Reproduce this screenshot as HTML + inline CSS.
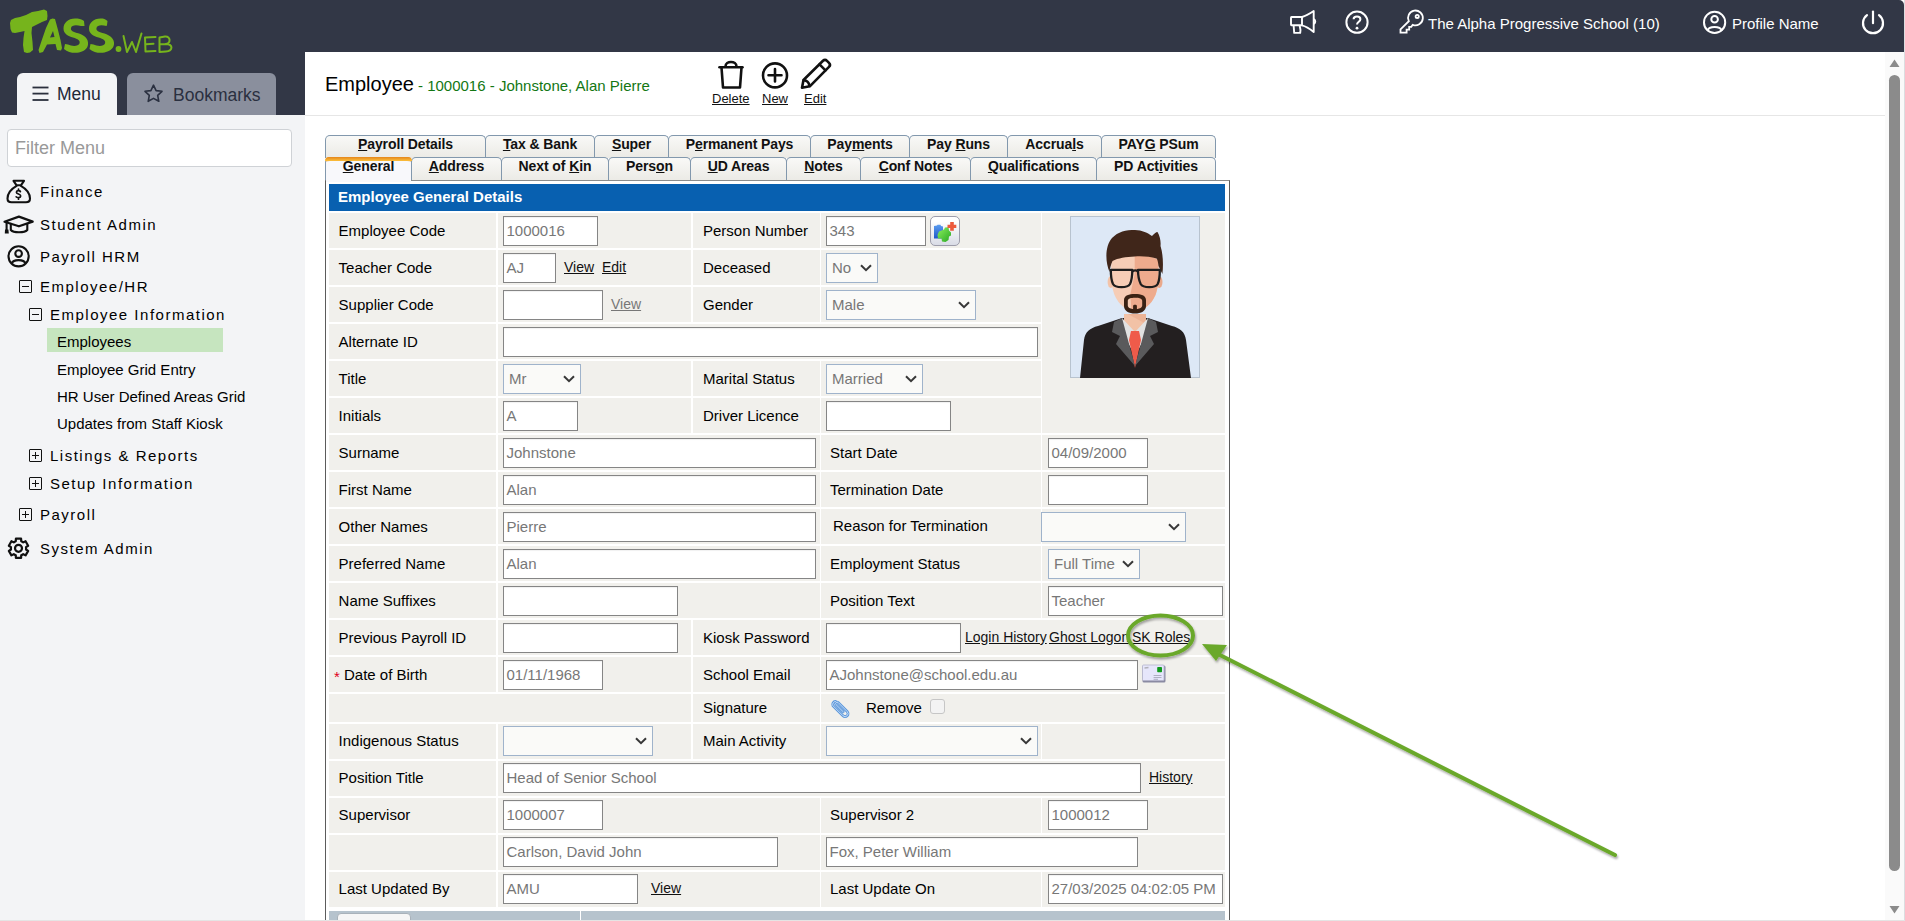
<!DOCTYPE html><html><head><meta charset="utf-8"><title>TASS.web Employee</title><style>
*{box-sizing:border-box}
html,body{margin:0;padding:0;width:1905px;height:921px;overflow:hidden;background:#fff;font-family:"Liberation Sans",sans-serif;color:#000}
.a{position:absolute}
#hdr{left:0;top:0;width:1904px;height:52px;background:#323746;border-top-right-radius:5px}
#sbtop{left:0;top:52px;width:305px;height:63px;background:#323746}
#sb{left:0;top:115px;width:305px;height:806px;background:#f3f4f6}
.tabm{border-radius:6px 6px 0 0;height:42px;top:73px}
.ht{color:#fff;font-size:15px;white-space:nowrap}
.si{font-size:15px;letter-spacing:1.5px;white-space:nowrap;line-height:18px}
.sub{font-size:15px;white-space:nowrap;line-height:18px}
.box{width:13px;height:13px;border:1.3px solid #111;border-radius:1px}
.box:before{content:"";position:absolute;left:2px;top:4.7px;width:6.5px;height:1.4px;background:#111}
.box.p:after{content:"";position:absolute;left:4.6px;top:2px;width:1.4px;height:6.5px;background:#111}
.tab{height:23px;border:1px solid #8298ad;border-bottom:none;border-radius:5px 5px 0 0;background:linear-gradient(#f9f9f7,#ebeae5);font-size:14px;font-weight:bold;text-align:center;line-height:16px;color:#111;letter-spacing:-0.1px;white-space:nowrap}
.tab u{text-decoration:underline}
.c{position:absolute;background:#f1f0ec}
.l{position:absolute;font-size:15px;line-height:35px;white-space:nowrap}
.i{position:absolute;height:30px;border:1px solid #858585;background:#fff;font-size:15px;color:#777;line-height:28px;padding-left:2.5px;box-shadow:inset 0 1px 1px rgba(0,0,0,0.06);white-space:nowrap;overflow:hidden}
.s{position:absolute;height:30px;border:1px solid #9fb3cb;background:#fafaf8;font-size:15px;color:#777;line-height:28px;padding-left:5px;white-space:nowrap;overflow:hidden}
.s svg{position:absolute;right:5px;top:10px}
.lk{position:absolute;font-size:14px;text-decoration:underline;white-space:nowrap;color:#111;line-height:16px}
</style></head><body>
<div id="hdr" class="a"></div><div id="sbtop" class="a"></div><div id="sb" class="a"></div>
<svg class="a" style="left:0;top:0" width="180" height="60" viewBox="0 0 180 60">
<g fill="#76b41c">
<path d="M10 23 L11 20 L15 18 L20 17 L26 15 L32 12 L38 11 L44 9.5 L47 11 L47.5 16 L47 20 L42 22 L36 25 L32 27 L31.5 33 L32.5 42 L33 50 L30 52.5 L27 53 L24 52 L23 45 L23.5 38 L24.5 31 L20 32 L15 33 L12 32.5 L10.5 29 Z"/>
<path d="M52.5 18.5 L55 19 L58 30 L60.5 40 L62 48 L61 50.5 L57 50 L55.5 44 L47 44.5 L43 52 L39.5 53 L38.5 50 L41.5 41 L46 28 L50 19.5 Z M50 37.5 L54.5 37 L53 31 Z" fill-rule="evenodd"/>
<path d="M75 18.5 C68 18.5 63.5 23 63.5 28.5 C63.5 34 68 36 73 37.5 C78 39 80.5 40.5 79.5 43.5 C78.5 46.5 72 46.5 68 44.5 L65 44 L64 49 C68 52.5 74 53.5 79 52.5 C85.5 51 88.5 47.5 88 42.5 C87.5 37 82.5 34.5 77 33 C72.5 31.8 70.5 30.5 71 28 C71.5 25 76 24.5 81 26 L84.5 26 L84 21 C81.5 19 78.5 18.5 75 18.5 Z"/>
<path d="M100.5 18.5 C93.5 18.5 89 23 89 28.5 C89 34 93.5 36 98.5 37.5 C103.5 39 106 40.5 105 43.5 C104 46.5 97.5 46.5 93.5 44.5 L90.5 44 L89.5 49 C93.5 52.5 99.5 53.5 104.5 52.5 C111 51 114.5 47.5 114 42.5 C113.5 37 108 34.5 102.5 33 C98 31.8 96 30.5 96.5 28 C97 25 101.5 24.5 106.5 26 L107 25 L107.5 21 C105 19 104 18.5 100.5 18.5 Z"/>
<circle cx="118.5" cy="49" r="2.9"/>
</g>
<g fill="none" stroke="#76b41c" stroke-width="2" stroke-linecap="round" stroke-linejoin="round">
<path d="M123.5 36 L127 52 L132 42 L136 52 L141.5 33.5"/>
<path d="M155.5 37 L145 37.5 L145.5 51.5 L155.5 51 M146 44.3 L153.5 43.8"/>
<path d="M159.5 37.5 L159.5 52 L166 51.5 C173 51 173.5 44 166 44 L159.5 44.3 M159.5 37.5 L165 36.5 C171 36 171 43.5 165.5 44"/>
</g></svg>
<div class="a tabm" style="left:17px;width:100px;background:#f3f4f6"></div>
<div class="a tabm" style="left:127px;width:149px;background:#8a8f9d"></div>
<svg class="a" style="left:31px;top:86px" width="19" height="15"><g stroke="#2a2f3d" stroke-width="1.8"><line x1="1.5" y1="1.5" x2="17.5" y2="1.5"/><line x1="1.5" y1="7.6" x2="17.5" y2="7.6"/><line x1="1.5" y1="14" x2="17.5" y2="14"/></g></svg>
<div class="a" style="left:57px;top:84px;font-size:17.5px;color:#222736;line-height:20px">Menu</div>
<svg class="a" style="left:143px;top:84px" width="21" height="19" viewBox="0 0 21 19"><path d="M10.5 1.2 L13.1 6.6 L19 7.3 L14.7 11.3 L15.8 17.3 L10.5 14.4 L5.2 17.3 L6.3 11.3 L2 7.3 L7.9 6.6 Z" fill="none" stroke="#2a3040" stroke-width="1.6" stroke-linejoin="round"/></svg>
<div class="a" style="left:173px;top:85px;font-size:17.5px;color:#2a3040;line-height:20px">Bookmarks</div>
<div class="a" style="left:7px;top:129px;width:285px;height:38px;border:1px solid #cfd2d6;border-radius:4px;background:#fff"></div>
<div class="a" style="left:15px;top:138px;font-size:18px;color:#999;line-height:21px">Filter Menu</div>
<div class="a si" style="left:40px;top:183px">Finance</div>
<div class="a si" style="left:40px;top:216px">Student Admin</div>
<div class="a si" style="left:40px;top:248px">Payroll HRM</div>
<div class="a si" style="left:40px;top:278px">Employee/HR</div>
<div class="a si" style="left:50px;top:306px">Employee Information</div>
<div class="a si" style="left:50px;top:447px">Listings &amp; Reports</div>
<div class="a si" style="left:50px;top:475px">Setup Information</div>
<div class="a si" style="left:40px;top:506px">Payroll</div>
<div class="a si" style="left:40px;top:540px">System Admin</div>
<div class="a" style="left:47px;top:328px;width:176px;height:24px;background:#c6e5bf"></div>
<div class="a sub" style="left:57px;top:333px">Employees</div>
<div class="a sub" style="left:57px;top:361px">Employee Grid Entry</div>
<div class="a sub" style="left:57px;top:388px">HR User Defined Areas Grid</div>
<div class="a sub" style="left:57px;top:415px">Updates from Staff Kiosk</div>
<div class="a box" style="left:19px;top:280px"></div>
<div class="a box" style="left:29px;top:308px"></div>
<div class="a box p" style="left:29px;top:449px"></div>
<div class="a box p" style="left:29px;top:477px"></div>
<div class="a box p" style="left:19px;top:508px"></div>
<svg class="a" style="left:0;top:175px" width="40" height="60" viewBox="0 175 40 60"><g fill="none" stroke="#111" stroke-width="2.1" stroke-linejoin="round" stroke-linecap="round">
<path d="M13.5 180.8 L24 180.8 L20.9 185.3 L16.6 185.3 Z"/>
<path d="M16.6 185.8 C11 189 7.5 194 7.5 198.5 C7.5 201 9 202.3 11.5 202.3 L26 202.3 C28.5 202.3 30 201 30 198.5 C30 194 26.5 189 20.9 185.8"/>
<path d="M20.4 191.6 C19.9 190.3 16.4 190.2 16.4 192.3 C16.4 194.3 20.7 193.8 20.7 196 C20.7 198 17.1 198 16.1 196.8 M18.5 189 L18.5 190.2 M18.5 197.9 L18.5 199.2" stroke-width="1.7"/>
<path d="M4.5 221.8 L18.9 216.6 L32.7 221.6 L18.9 226.3 Z" stroke-width="2.2"/>
<path d="M10.8 223.8 L10.8 230 C13.5 233 24.5 233 27.3 230 L27.3 223.8"/>
<path d="M6.6 222.5 L6.6 230"/>
</g><path d="M5 229.5 L8.4 229.5 L8.8 233.4 L4.8 233.4 Z" fill="#111"/></svg>
<svg class="a" style="left:0;top:240px" width="40" height="40" viewBox="0 240 40 40"><g fill="none" stroke="#111" stroke-width="2.1">
<circle cx="18.6" cy="256.3" r="10.1"/><circle cx="18.6" cy="253.6" r="3.3"/>
<path d="M11.8 263.5 C13 259 24.2 259 25.4 263.5"/></g></svg>
<svg class="a" style="left:0;top:530px" width="40" height="40" viewBox="0 530 40 40"><g fill="none" stroke="#111" stroke-width="2.2" stroke-linejoin="round">
<path d="M15.78 541.20 L15.91 538.64 L21.09 538.64 L21.22 541.20 A7.6 7.6 0 0 1 23.28 542.39 L25.57 541.23 L28.16 545.71 L26.01 547.11 A7.6 7.6 0 0 1 26.01 549.49 L28.16 550.89 L25.57 555.37 L23.28 554.21 A7.6 7.6 0 0 1 21.22 555.40 L21.09 557.96 L15.91 557.96 L15.78 555.40 A7.6 7.6 0 0 1 13.72 554.21 L11.43 555.37 L8.84 550.89 L10.99 549.49 A7.6 7.6 0 0 1 10.99 547.11 L8.84 545.71 L11.43 541.23 L13.72 542.39 A7.6 7.6 0 0 1 15.78 541.20 Z"/><circle cx="18.5" cy="548.3" r="3.5"/></g></svg>
<svg class="a" style="left:1280px;top:0" width="40" height="40" viewBox="1280 0 40 40"><g fill="none" stroke="#fff" stroke-width="1.9" stroke-linejoin="round">
<path d="M1291.5 17 L1302 17 L1302 25.3 L1291.5 25.3 Q1291 25.3 1291 24.6 L1291 17.7 Q1291 17 1291.5 17 Z"/>
<path d="M1302 17 C1306 16 1310 13.5 1313.7 11 L1313.7 32 C1310 29 1306 26.3 1302 25.3"/>
<path d="M1313.7 19.2 C1315.8 20 1315.8 23 1313.7 23.8"/>
<path d="M1293.6 25.3 L1294.2 32.9 L1300.2 32.9 L1300.5 30 L1299.6 25.3"/>
</g></svg>
<svg class="a" style="left:1344px;top:9px" width="26" height="26" viewBox="0 0 26 26"><g fill="none" stroke="#fff" stroke-width="2"><circle cx="13" cy="13.2" r="10.6"/><path d="M9.6 10.2 C9.6 6.6 16.4 6.6 16.4 10.2 C16.4 12.6 13 12.9 13 15.6"/></g><circle cx="13" cy="19.2" r="1.4" fill="#fff"/></svg>
<svg class="a" style="left:1390px;top:0" width="40" height="40" viewBox="1390 0 40 40"><g fill="none" stroke="#fff" stroke-width="1.8" stroke-linejoin="miter">
<path d="M1408.8 21.2 A7.4 7.4 0 1 1 1412.7 24.8 L1411.3 26.8 L1409.2 26.8 L1409.2 29.6 L1406.6 29.6 L1406.6 32.6 L1400.5 32.6 L1400.5 29.4 Z"/>
<circle cx="1417.2" cy="16.4" r="1.6"/></g></svg>
<div class="a ht" style="left:1428px;top:15px;line-height:18px">The Alpha Progressive School (10)</div>
<svg class="a" style="left:1695px;top:0" width="200" height="45" viewBox="1695 0 200 45"><g fill="none" stroke="#fff" stroke-width="2" stroke-linecap="round">
<circle cx="1714.6" cy="22.4" r="10.6"/><circle cx="1714.6" cy="19.2" r="3.3"/><path d="M1707.6 30.2 C1709 25.8 1720.2 25.8 1721.6 30.2"/>
<path d="M1867 15.2 A10 10 0 1 0 1879 15.2" stroke-width="2.2"/><path d="M1873 11.5 L1873 23.2" stroke-width="2.2"/></g></svg>
<div class="a ht" style="left:1732px;top:15px;line-height:18px">Profile Name</div>
<div class="a" style="left:1885px;top:52px;width:19px;height:869px;background:#fafafa"></div>
<div class="a" style="left:1904px;top:0;width:1px;height:921px;background:#dcdde0"></div>
<svg class="a" style="left:1889px;top:59px" width="11" height="9"><path d="M5.5 0.5 L10.5 8 L0.5 8 Z" fill="#8b8b8b"/></svg>
<div class="a" style="left:1889px;top:75px;width:11px;height:796px;border-radius:6px;background:#8b8b8b"></div>
<svg class="a" style="left:1889px;top:905px" width="11" height="9"><path d="M0.5 1 L10.5 1 L5.5 8.5 Z" fill="#8b8b8b"/></svg>
<div class="a" style="left:305px;top:115px;width:1580px;height:1px;background:#e6e6e6"></div>
<div class="a" style="left:325px;top:73px;font-size:20px;line-height:23px">Employee</div>
<div class="a" style="left:418px;top:77px;font-size:15px;line-height:18px;color:#137713">- 1000016 - Johnstone, Alan Pierre</div>
<svg class="a" style="left:700px;top:55px" width="140" height="40" viewBox="700 55 140 40"><g fill="none" stroke="#111" stroke-width="2.6" stroke-linejoin="round" stroke-linecap="round">
<path d="M719.5 67.3 L742.5 67.3"/><path d="M725.5 66.5 C725.5 60.5 736.5 60.5 736.5 66.5"/><path d="M721.5 67.5 L723 87.5 L740 87.5 L741.5 67.5"/>
<circle cx="775" cy="75.4" r="12"/><path d="M775 69 L775 81.5 M768.5 75.3 L781.5 75.3"/>
<path d="M802 87.8 L803.5 80 L823 60.8 C824.3 59.5 825.7 59.5 827 60.8 L829 62.8 C830.3 64.1 830.3 65.5 829 66.8 L809.8 86.3 Z"/><path d="M819.5 64.3 L825.5 70.3"/><path d="M803.8 80.3 C806.5 80.5 809 82.5 809.5 86"/>
</g></svg>
<div class="a lk" style="left:712px;top:91px;font-size:13px">Delete</div>
<div class="a lk" style="left:762px;top:91px;font-size:13px">New</div>
<div class="a lk" style="left:804px;top:91px;font-size:13px">Edit</div>
<div class="a tab" style="left:325px;top:135px;width:161px;height:23px"><u>P</u>ayroll Details</div>
<div class="a tab" style="left:485px;top:135px;width:110px;height:23px"><u>T</u>ax &amp; Bank</div>
<div class="a tab" style="left:594px;top:135px;width:75px;height:23px"><u>S</u>uper</div>
<div class="a tab" style="left:668px;top:135px;width:143px;height:23px">P<u>e</u>rmanent Pays</div>
<div class="a tab" style="left:810px;top:135px;width:100px;height:23px">Pay<u>m</u>ents</div>
<div class="a tab" style="left:909px;top:135px;width:99px;height:23px">Pay <u>R</u>uns</div>
<div class="a tab" style="left:1007px;top:135px;width:95px;height:23px">Accrua<u>l</u>s</div>
<div class="a tab" style="left:1101px;top:135px;width:115px;height:23px">PAY<u>G</u> PSum</div>
<div class="a tab" style="left:325px;top:157px;width:87px;height:24px;background:#f8f8fb;border-top:4px solid #f0a02a;line-height:11px"><u>G</u>eneral</div>
<div class="a tab" style="left:411px;top:157px;width:91px;height:24px"><u>A</u>ddress</div>
<div class="a tab" style="left:501px;top:157px;width:108px;height:24px">Next of <u>K</u>in</div>
<div class="a tab" style="left:608px;top:157px;width:83px;height:24px">Pers<u>o</u>n</div>
<div class="a tab" style="left:690px;top:157px;width:97px;height:24px"><u>U</u>D Areas</div>
<div class="a tab" style="left:786px;top:157px;width:75px;height:24px"><u>N</u>otes</div>
<div class="a tab" style="left:860px;top:157px;width:111px;height:24px"><u>C</u>onf Notes</div>
<div class="a tab" style="left:970px;top:157px;width:127px;height:24px"><u>Q</u>ualifications</div>
<div class="a tab" style="left:1096px;top:157px;width:120px;height:24px">PD Act<u>i</u>vities</div>
<div class="a" style="left:325px;top:157px;width:87px;height:4px;border-radius:5px 5px 0 0;background:linear-gradient(#e4861b,#fcc03c)"></div>
<div class="a" style="left:325px;top:180px;width:905px;height:760px;border:1px solid #5c5c5c;border-top-color:#8c8c8c;background:#fff"></div>
<div class="a" style="left:326px;top:180px;width:85px;height:2px;background:#f8f8fb"></div>
<div class="a" style="left:329px;top:184px;width:896px;height:27px;background:#0860b0"></div>
<div class="a" style="left:338px;top:183px;font-size:15px;font-weight:bold;color:#fff;line-height:27px">Employee General Details</div>
<div class="c" style="left:329px;top:213px;width:167px;height:35px"></div>
<div class="c" style="left:498px;top:213px;width:193px;height:35px"></div>
<div class="c" style="left:693px;top:213px;width:127px;height:35px"></div>
<div class="c" style="left:821px;top:213px;width:220px;height:35px"></div>
<div class="c" style="left:329px;top:250px;width:167px;height:35px"></div>
<div class="c" style="left:498px;top:250px;width:193px;height:35px"></div>
<div class="c" style="left:693px;top:250px;width:127px;height:35px"></div>
<div class="c" style="left:821px;top:250px;width:220px;height:35px"></div>
<div class="c" style="left:329px;top:287px;width:167px;height:35px"></div>
<div class="c" style="left:498px;top:287px;width:193px;height:35px"></div>
<div class="c" style="left:693px;top:287px;width:127px;height:35px"></div>
<div class="c" style="left:821px;top:287px;width:220px;height:35px"></div>
<div class="c" style="left:329px;top:324px;width:167px;height:35px"></div>
<div class="c" style="left:498px;top:324px;width:543px;height:35px"></div>
<div class="c" style="left:329px;top:361px;width:167px;height:35px"></div>
<div class="c" style="left:498px;top:361px;width:193px;height:35px"></div>
<div class="c" style="left:693px;top:361px;width:127px;height:35px"></div>
<div class="c" style="left:821px;top:361px;width:220px;height:35px"></div>
<div class="c" style="left:329px;top:398px;width:167px;height:35px"></div>
<div class="c" style="left:498px;top:398px;width:193px;height:35px"></div>
<div class="c" style="left:693px;top:398px;width:127px;height:35px"></div>
<div class="c" style="left:821px;top:398px;width:220px;height:35px"></div>
<div class="c" style="left:1042px;top:213px;width:183px;height:220px"></div>
<div class="c" style="left:329px;top:435px;width:167px;height:35px"></div>
<div class="c" style="left:498px;top:435px;width:322px;height:35px"></div>
<div class="c" style="left:821px;top:435px;width:220px;height:35px"></div>
<div class="c" style="left:1042px;top:435px;width:183px;height:35px"></div>
<div class="c" style="left:329px;top:472px;width:167px;height:35px"></div>
<div class="c" style="left:498px;top:472px;width:322px;height:35px"></div>
<div class="c" style="left:821px;top:472px;width:220px;height:35px"></div>
<div class="c" style="left:1042px;top:472px;width:183px;height:35px"></div>
<div class="c" style="left:329px;top:509px;width:167px;height:35px"></div>
<div class="c" style="left:498px;top:509px;width:322px;height:35px"></div>
<div class="c" style="left:821px;top:509px;width:220px;height:35px"></div>
<div class="c" style="left:1042px;top:509px;width:183px;height:35px"></div>
<div class="c" style="left:329px;top:546px;width:167px;height:35px"></div>
<div class="c" style="left:498px;top:546px;width:322px;height:35px"></div>
<div class="c" style="left:821px;top:546px;width:220px;height:35px"></div>
<div class="c" style="left:1042px;top:546px;width:183px;height:35px"></div>
<div class="c" style="left:329px;top:583px;width:167px;height:35px"></div>
<div class="c" style="left:498px;top:583px;width:322px;height:35px"></div>
<div class="c" style="left:821px;top:583px;width:220px;height:35px"></div>
<div class="c" style="left:1042px;top:583px;width:183px;height:35px"></div>
<div class="c" style="left:329px;top:620px;width:167px;height:35px"></div>
<div class="c" style="left:498px;top:620px;width:193px;height:35px"></div>
<div class="c" style="left:693px;top:620px;width:127px;height:35px"></div>
<div class="c" style="left:821px;top:620px;width:404px;height:35px"></div>
<div class="c" style="left:329px;top:657px;width:167px;height:35px"></div>
<div class="c" style="left:498px;top:657px;width:193px;height:35px"></div>
<div class="c" style="left:693px;top:657px;width:127px;height:35px"></div>
<div class="c" style="left:821px;top:657px;width:404px;height:35px"></div>
<div class="c" style="left:329px;top:694px;width:362px;height:28px"></div>
<div class="c" style="left:693px;top:694px;width:127px;height:28px"></div>
<div class="c" style="left:821px;top:694px;width:404px;height:28px"></div>
<div class="c" style="left:329px;top:724px;width:167px;height:35px"></div>
<div class="c" style="left:498px;top:724px;width:193px;height:35px"></div>
<div class="c" style="left:693px;top:724px;width:127px;height:35px"></div>
<div class="c" style="left:821px;top:724px;width:220px;height:35px"></div>
<div class="c" style="left:1042px;top:724px;width:183px;height:35px"></div>
<div class="c" style="left:329px;top:761px;width:167px;height:35px"></div>
<div class="c" style="left:498px;top:761px;width:727px;height:35px"></div>
<div class="c" style="left:329px;top:798px;width:167px;height:35px"></div>
<div class="c" style="left:498px;top:798px;width:322px;height:35px"></div>
<div class="c" style="left:821px;top:798px;width:220px;height:35px"></div>
<div class="c" style="left:1042px;top:798px;width:183px;height:35px"></div>
<div class="c" style="left:329px;top:835px;width:167px;height:35px"></div>
<div class="c" style="left:498px;top:835px;width:322px;height:35px"></div>
<div class="c" style="left:821px;top:835px;width:404px;height:35px"></div>
<div class="c" style="left:329px;top:872px;width:167px;height:35px"></div>
<div class="c" style="left:498px;top:872px;width:322px;height:35px"></div>
<div class="c" style="left:821px;top:872px;width:220px;height:35px"></div>
<div class="c" style="left:1042px;top:872px;width:183px;height:35px"></div>
<div class="l" style="left:338.6px;top:213px;line-height:35px">Employee Code</div>
<div class="l" style="left:338.6px;top:250px;line-height:35px">Teacher Code</div>
<div class="l" style="left:338.6px;top:287px;line-height:35px">Supplier Code</div>
<div class="l" style="left:338.6px;top:324px;line-height:35px">Alternate ID</div>
<div class="l" style="left:338.6px;top:361px;line-height:35px">Title</div>
<div class="l" style="left:338.6px;top:398px;line-height:35px">Initials</div>
<div class="l" style="left:338.6px;top:435px;line-height:35px">Surname</div>
<div class="l" style="left:338.6px;top:472px;line-height:35px">First Name</div>
<div class="l" style="left:338.6px;top:509px;line-height:35px">Other Names</div>
<div class="l" style="left:338.6px;top:546px;line-height:35px">Preferred Name</div>
<div class="l" style="left:338.6px;top:583px;line-height:35px">Name Suffixes</div>
<div class="l" style="left:338.6px;top:620px;line-height:35px">Previous Payroll ID</div>
<div class="l" style="left:334px;top:659px;color:#e0001a;font-size:15px">*</div>
<div class="l" style="left:344px;top:657px;line-height:35px">Date of Birth</div>
<div class="l" style="left:338.6px;top:723px;line-height:35px">Indigenous Status</div>
<div class="l" style="left:338.6px;top:760px;line-height:35px">Position Title</div>
<div class="l" style="left:338.6px;top:797px;line-height:35px">Supervisor</div>
<div class="l" style="left:338.6px;top:871px;line-height:35px">Last Updated By</div>
<div class="l" style="left:703px;top:213px;line-height:35px">Person Number</div>
<div class="l" style="left:703px;top:250px;line-height:35px">Deceased</div>
<div class="l" style="left:703px;top:287px;line-height:35px">Gender</div>
<div class="l" style="left:703px;top:361px;line-height:35px">Marital Status</div>
<div class="l" style="left:703px;top:398px;line-height:35px">Driver Licence</div>
<div class="l" style="left:703px;top:620px;line-height:35px">Kiosk Password</div>
<div class="l" style="left:703px;top:657px;line-height:35px">School Email</div>
<div class="l" style="left:703px;top:694px;line-height:28px">Signature</div>
<div class="l" style="left:703px;top:723px;line-height:35px">Main Activity</div>
<div class="l" style="left:830px;top:435px;line-height:35px">Start Date</div>
<div class="l" style="left:830px;top:472px;line-height:35px">Termination Date</div>
<div class="l" style="left:830px;top:546px;line-height:35px">Employment Status</div>
<div class="l" style="left:830px;top:583px;line-height:35px">Position Text</div>
<div class="l" style="left:830px;top:797px;line-height:35px">Supervisor 2</div>
<div class="l" style="left:830px;top:871px;line-height:35px">Last Update On</div>
<div class="l" style="left:833px;top:508px">Reason for Termination</div>
<div class="i" style="left:503px;top:216px;width:95px">1000016</div>
<div class="i" style="left:826px;top:216px;width:100px">343</div>
<div class="i" style="left:503px;top:253px;width:53px">AJ</div>
<div class="lk" style="left:564px;top:258.5px;color:#111">View</div>
<div class="lk" style="left:602px;top:258.5px;color:#111">Edit</div>
<div class="s" style="left:826px;top:253px;width:52px">No<svg width="12" height="8" viewBox="0 0 12 8"><path d="M1 1.2 L6 6.2 L11 1.2" fill="none" stroke="#383838" stroke-width="2"/></svg></div>
<div class="i" style="left:503px;top:290px;width:100px"></div>
<div class="lk" style="left:611px;top:295.5px;color:#777">View</div>
<div class="s" style="left:826px;top:290px;width:150px">Male<svg width="12" height="8" viewBox="0 0 12 8"><path d="M1 1.2 L6 6.2 L11 1.2" fill="none" stroke="#383838" stroke-width="2"/></svg></div>
<div class="i" style="left:503px;top:327px;width:535px"></div>
<div class="s" style="left:503px;top:364px;width:78px">Mr<svg width="12" height="8" viewBox="0 0 12 8"><path d="M1 1.2 L6 6.2 L11 1.2" fill="none" stroke="#383838" stroke-width="2"/></svg></div>
<div class="s" style="left:826px;top:364px;width:97px">Married<svg width="12" height="8" viewBox="0 0 12 8"><path d="M1 1.2 L6 6.2 L11 1.2" fill="none" stroke="#383838" stroke-width="2"/></svg></div>
<div class="i" style="left:503px;top:401px;width:75px">A</div>
<div class="i" style="left:826px;top:401px;width:125px"></div>
<div class="i" style="left:503px;top:438px;width:313px">Johnstone</div>
<div class="i" style="left:503px;top:475px;width:313px">Alan</div>
<div class="i" style="left:503px;top:512px;width:313px">Pierre</div>
<div class="i" style="left:503px;top:549px;width:313px">Alan</div>
<div class="i" style="left:1048px;top:438px;width:100px">04/09/2000</div>
<div class="i" style="left:1048px;top:475px;width:100px"></div>
<div class="s" style="left:1041px;top:512px;width:145px"><svg width="12" height="8" viewBox="0 0 12 8"><path d="M1 1.2 L6 6.2 L11 1.2" fill="none" stroke="#383838" stroke-width="2"/></svg></div>
<div class="s" style="left:1048px;top:549px;width:92px">Full Time<svg width="12" height="8" viewBox="0 0 12 8"><path d="M1 1.2 L6 6.2 L11 1.2" fill="none" stroke="#383838" stroke-width="2"/></svg></div>
<div class="i" style="left:503px;top:586px;width:175px"></div>
<div class="i" style="left:1048px;top:586px;width:175px">Teacher</div>
<div class="i" style="left:503px;top:623px;width:175px"></div>
<div class="i" style="left:826px;top:623px;width:135px"></div>
<div class="lk" style="left:965px;top:628.5px;color:#111">Login History</div>
<div class="lk" style="left:1049px;top:628.5px;color:#111">Ghost Logon</div>
<div class="lk" style="left:1132px;top:628.5px;color:#111">SK Roles</div>
<div class="i" style="left:503px;top:660px;width:100px">01/11/1968</div>
<div class="i" style="left:826px;top:660px;width:312px">AJohnstone@school.edu.au</div>
<div class="s" style="left:503px;top:726px;width:150px"><svg width="12" height="8" viewBox="0 0 12 8"><path d="M1 1.2 L6 6.2 L11 1.2" fill="none" stroke="#383838" stroke-width="2"/></svg></div>
<div class="s" style="left:826px;top:726px;width:212px"><svg width="12" height="8" viewBox="0 0 12 8"><path d="M1 1.2 L6 6.2 L11 1.2" fill="none" stroke="#383838" stroke-width="2"/></svg></div>
<div class="i" style="left:503px;top:763px;width:638px">Head of Senior School</div>
<div class="lk" style="left:1149px;top:768.5px;color:#111">History</div>
<div class="i" style="left:503px;top:800px;width:100px">1000007</div>
<div class="i" style="left:1048px;top:800px;width:100px">1000012</div>
<div class="i" style="left:503px;top:837px;width:275px">Carlson, David John</div>
<div class="i" style="left:826px;top:837px;width:312px">Fox, Peter William</div>
<div class="i" style="left:503px;top:874px;width:135px">AMU</div>
<div class="lk" style="left:651px;top:879.5px;color:#111">View</div>
<div class="i" style="left:1048px;top:874px;width:175px">27/03/2025 04:02:05 PM</div>
<div class="l" style="left:866px;top:694px;line-height:28px">Remove</div>
<div class="a" style="left:930px;top:699px;width:15px;height:15px;border:1.5px solid #c6c6c6;border-radius:3px;background:#f3f3f3"></div>
<svg class="a" style="left:824px;top:694px" width="30" height="28" viewBox="824 694 30 28">
<g transform="translate(840 708.8) rotate(45) scale(0.8)" fill="none" stroke-linecap="round">
<path d="M5.5 -0.2 L-7.5 -0.2 A1.9 1.9 0 0 1 -7.5 -3.9 L8.8 -3.9 A3.7 3.7 0 0 1 8.8 3.5 L-9 3.5 A3.7 3.7 0 0 1 -10.5 -2.5" stroke="#5b97dc" stroke-width="3.4"/>
<path d="M5.5 -0.2 L-7.5 -0.2 A1.9 1.9 0 0 1 -7.5 -3.9 L8.8 -3.9 A3.7 3.7 0 0 1 8.8 3.5 L-9 3.5 A3.7 3.7 0 0 1 -10.5 -2.5" stroke="#cfe2f8" stroke-width="1.1"/>
</g></svg>
<div class="a" style="left:930px;top:216px;width:30px;height:30px;border:1.5px solid #9d9dab;border-radius:5px;background:linear-gradient(#ffffff 15%,#d9dce6)"></div>
<svg class="a" style="left:925px;top:210px" width="40" height="40" viewBox="925 210 40 40">
<defs><linearGradient id="gb" x1="0" y1="0" x2="0" y2="1"><stop offset="0" stop-color="#5a9cf0"/><stop offset="1" stop-color="#1f58c8"/></linearGradient>
<linearGradient id="gg" x1="0" y1="0" x2="1" y2="1"><stop offset="0" stop-color="#8ef060"/><stop offset="1" stop-color="#27a822"/></linearGradient></defs>
<path d="M934 226 L937 225.5 L937.5 224.8 L940.5 224.8 L941 226 L943 226.5 L943 238.5 L934 238.5 Z" fill="url(#gb)"/>
<path d="M939 231.5 L944 229.5 L945 227.5 L948.5 227.3 L949 230.5 L951 232.5 L951 235.5 L949 236.5 L948.5 240 L945.5 242 L942 241.5 L941.5 238.5 L938 238.5 L937.5 235 Z" fill="url(#gg)"/>
<path d="M950.2 222 L953.8 222 L953.8 224.7 L956.3 224.7 L956.3 228 L953.8 228 L953.8 230.8 L950.2 230.8 L950.2 228 L947.5 228 L947.5 224.7 L950.2 224.7 Z" fill="#ec5a3c"/>
</svg>
<svg class="a" style="left:1138px;top:660px" width="34" height="30" viewBox="1138 660 34 30">
<rect x="1142.5" y="665.5" width="23" height="17" rx="1.5" fill="#8a8aa2"/>
<rect x="1142.5" y="665" width="21.5" height="15.5" rx="1" fill="#e6e6fb" stroke="#b4b4cc" stroke-width="0.8"/>
<rect x="1157.2" y="667" width="4.8" height="5.2" rx="0.8" fill="#119a1c"/>
<path d="M1153.6 675.5 L1161.5 675.5 M1153.6 677.5 L1161.5 677.5 M1153.6 679.3 L1158 679.3" stroke="#a8a8bc" stroke-width="0.9"/>
<path d="M1144.5 668 L1148.5 667.5" stroke="#b0b0b8" stroke-width="1.5"/>
</svg>
<svg class="a" style="left:1070px;top:216px" width="130" height="162" viewBox="0 0 130 162">
<rect x="0.5" y="0.5" width="129" height="161" fill="#dde8f6" stroke="#b8c3cf"/>
<path d="M10 162 L14 124 C15 116 20 112 28 110 L52 102 L78 102 L102 110 C110 112 115 116 116 124 L121 162 Z" fill="#231f20"/>
<path d="M54 98 L76 98 L76 110 L65 116 L54 110 Z" fill="#f2c2a6"/>
<path d="M58 98 L76 98 L76 108 Z" fill="#e8a98a" opacity="0.6"/>
<path d="M52 102 L65 116 L78 102 L80 112 L65 140 L50 112 Z" fill="#e2e2e2"/>
<path d="M61 115 L69 115 L71 124 L65 152 L59 124 Z" fill="#ef5b4a"/>
<path d="M44 106 L52 102 L65 150 L46 128 L50 120 L42 116 Z" fill="#5a5a5c"/>
<path d="M86 106 L78 102 L65 150 L84 128 L80 120 L88 116 Z" fill="#5a5a5c"/>
<path d="M41.5 44 C40.5 60 41.5 71 44.5 79 C49 89 56 94.7 65 94.7 C74 94.7 81 89 85.5 79 C88.5 71 89.5 60 88 44 C80 38 50 38 41.5 44 Z" fill="#f6cdb6"/>
<path d="M64.7 38.5 C75 38.5 83 40 88 44 C89.5 60 88.5 71 85.5 79 C81 89 74 94.7 65 94.7 L61.5 94.2 L60.3 78.5 L64.7 58 Z" fill="#eeab8d"/>
<ellipse cx="40.8" cy="66" rx="3.2" ry="6" fill="#f3c3a8"/><ellipse cx="89.3" cy="66" rx="3.2" ry="6" fill="#eaa88a"/>
<path d="M39.5 56 C35 45 35 30 42 22 C48 15.5 56 13.9 65 13.9 C72 13.9 78 17 82 19.9 C84 18 86 16 87.5 16 C90 20 91 26 90.5 30 C93 38 93.5 48 92.4 58 L88.5 50 C88 46 87.5 43.5 86.5 42.6 C80 40.5 72 40 64.7 40.5 C56 41 48 42 42.5 45 C41 48 40 52 39.5 56 Z" fill="#40261a"/>
<g fill="none" stroke="#1e1e1e" stroke-width="2.3" stroke-linejoin="round">
<path d="M40.8 53.8 L62.3 53.8 C62.3 58 62 64 60 68 C58.5 70.5 55 71.2 51.5 71.2 C48 71.2 44.5 70.5 43 68 C41.5 65 40.8 58 40.8 53.8 Z"/>
<path d="M68 53.8 L89.8 53.8 C89.8 58 89.2 65 87.7 68 C86.2 70.5 82.7 71.2 79.2 71.2 C75.7 71.2 72.2 70.5 70.7 68 C68.7 64 68 58 68 53.8 Z"/>
<path d="M62.3 55.5 C64 54.3 66.5 54.3 68 55.5"/></g>
<path d="M54 84 C54 79.5 59 78 65 78 C71 78 76 79.5 76 84 L76 90 C76 95 71 97.5 65 97.5 C59 97.5 54 95 54 90 Z M57.8 85 C57.8 82.5 61 81.8 65 81.8 C69 81.8 72.2 82.5 72.2 85 L72.2 89.5 C72.2 92 69 93.1 65 93.1 C61 93.1 57.8 92 57.8 89.5 Z" fill="#3a2214" fill-rule="evenodd"/>
<path d="M63.1 89.8 C63.1 88.3 66.9 88.3 66.9 89.8 L66.9 94.5 L63.1 94.5 Z" fill="#3a2214"/>
</svg>
<svg class="a" style="left:1100px;top:600px" width="540" height="270" viewBox="1100 600 540 270">
<defs><filter id="sh" x="-10%" y="-10%" width="120%" height="120%"><feDropShadow dx="1" dy="2" stdDeviation="1" flood-color="#000" flood-opacity="0.35"/></filter></defs>
<g filter="url(#sh)">
<ellipse cx="1160.5" cy="635.5" rx="32.5" ry="20" fill="none" stroke="#6aa82a" stroke-width="4"/>
<path d="M1615 855 L1214 652" stroke="#6aa82a" stroke-width="4" stroke-linecap="round"/>
<path d="M1202 644 L1227 645 L1216 661 Z" fill="#6aa82a"/>
</g></svg>
<div class="a" style="left:329px;top:911px;width:251px;height:10px;background:#b6c3cd"></div>
<div class="a" style="left:581px;top:911px;width:644px;height:10px;background:#b6c3cd"></div>
<div class="a" style="left:337px;top:913px;width:74px;height:10px;border:1px solid #a9b2ba;border-radius:4px 4px 0 0;background:#f6f6f6"></div>
<div class="a" style="left:0;top:920px;width:1905px;height:1px;background:#e4e4e4"></div>
</body></html>
